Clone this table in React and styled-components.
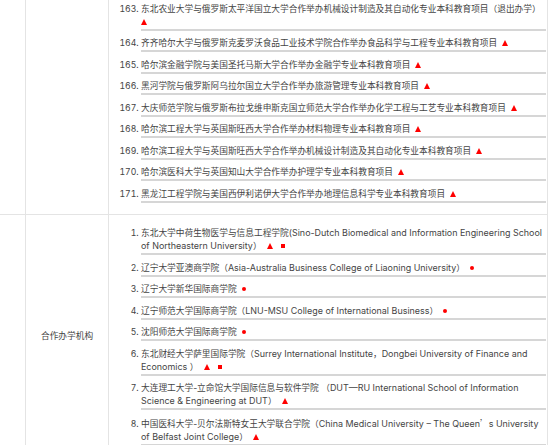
import React from "react";
import styled, { createGlobalStyle } from "styled-components";

const Global = createGlobalStyle`
  html, body { margin: 0; padding: 0; background: #fff; overflow: hidden; }
  body { font-family: "Inter", "Noto Sans CJK SC", sans-serif; }
`;

const Table = styled.div`
  width: 548px;
  margin-top: -9.5px;
  border-right: 1px solid #e4e4e4;
  box-sizing: border-box;
`;

const Row = styled.div`
  display: grid;
  grid-template-columns: 26px 83px 1fr;
  border-bottom: 1px solid #e4e4e4;
`;

const Cell = styled.div`
  box-sizing: border-box;
  border-right: 1px solid #e4e4e4;
  display: flex;
  align-items: center;
  justify-content: center;
  font-size: 8.7px;
  line-height: 13px;
  color: #444;
`;

const ListCell = styled.div`
  padding: 5.5px 1.5px 11.5px 0;
  min-width: 0;
`;

const List = styled.ol`
  margin: 0;
  padding: 0 0 0 32px;
  font-size: 8.7px;
  line-height: 13px;
  color: #444;
`;

const Item = styled.li`
  padding-top: 6.5px;
  border-bottom: 2px solid #d6d6d6;
  white-space: nowrap;
`;

const En = styled.span`
  font-size: 8.95px;
  line-height: 0;
`;

const Tri = styled.span`
  display: inline-block;
  width: 0;
  height: 0;
  border-left: 3.5px solid transparent;
  border-right: 3.5px solid transparent;
  border-bottom: 6px solid #f00;
  margin-left: ${(p) => (p.$first ? "0" : "5px")};
`;

const Sq = styled.span`
  display: inline-block;
  width: 4px;
  height: 4px;
  background: #f00;
  margin-left: 8px;
  vertical-align: 1px;
`;

const Dot = styled.span`
  display: inline-block;
  width: 4px;
  height: 4px;
  border-radius: 50%;
  background: #f00;
  margin-left: 5px;
  vertical-align: 1px;
`;

const Cjk = styled.span`
  font-family: "Noto Sans CJK SC", sans-serif;
`;

const topItems = [
  "齐齐哈尔大学与俄罗斯克麦罗沃食品工业技术学院合作举办食品科学与工程专业本科教育项目",
  "哈尔滨金融学院与美国圣托马斯大学合作举办金融学专业本科教育项目",
  "黑河学院与俄罗斯阿乌拉尔国立大学合作举办旅游管理专业本科教育项目",
  "大庆师范学院与俄罗斯布拉戈维申斯克国立师范大学合作举办化学工程与工艺专业本科教育项目",
  "哈尔滨工程大学与英国斯旺西大学合作举办材料物理专业本科教育项目",
  "哈尔滨工程大学与英国斯旺西大学合作举办机械设计制造及其自动化专业本科教育项目",
  "哈尔滨医科大学与英国知山大学合作举办护理学专业本科教育项目",
  "黑龙江工程学院与美国西伊利诺伊大学合作举办地理信息科学专业本科教育项目",
];

export default function App() {
  return (
    <>
      <Global />
      <Table>
        <Row>
          <Cell />
          <Cell />
          <ListCell>
            <List start={163}>
              <Item>
                东北农业大学与俄罗斯太平洋国立大学合作举办机械设计制造及其自动化专业本科教育项目（退出办学）
                <br />
                <Tri $first />
              </Item>
              {topItems.map((t) => (
                <Item key={t}>
                  {t}
                  <Tri />
                </Item>
              ))}
            </List>
          </ListCell>
        </Row>
        <Row>
          <Cell />
          <Cell>合作办学机构</Cell>
          <ListCell>
            <List>
              <Item>
                东北大学中荷生物医学与信息工程学院<En>(Sino-Dutch Biomedical and Information Engineering School</En>
                <br />
                <En>of Northeastern University</En>）
                <Tri />
                <Sq />
              </Item>
              <Item>
                辽宁大学亚澳商学院（<En>Asia-Australia Business College of Liaoning University</En>）
                <Dot />
              </Item>
              <Item>
                辽宁大学新华国际商学院
                <Dot />
              </Item>
              <Item>
                辽宁师范大学国际商学院（<En>LNU-MSU College of International Business</En>）
                <Dot />
              </Item>
              <Item>
                沈阳师范大学国际商学院
                <Dot />
              </Item>
              <Item>
                东北财经大学萨里国际学院（<En>Surrey International Institute</En>，<En>Dongbei University of Finance and</En>
                <br />
                <En>Economics </En>）
                <Tri />
                <Sq />
              </Item>
              <Item>
                大连理工大学-立命馆大学国际信息与软件学院 （<En>DUT—RU International School of Information</En>
                <br />
                <En>Science &amp; Engineering at DUT</En>）
                <Tri />
              </Item>
              <Item>
                中国医科大学-贝尔法斯特女王大学联合学院（<En>China Medical University – The Queen</En><Cjk>’</Cjk><En>s University</En>
                <br />
                <En>of Belfast Joint College</En>）
                <Tri />
              </Item>
            </List>
          </ListCell>
        </Row>
      </Table>
    </>
  );
}
